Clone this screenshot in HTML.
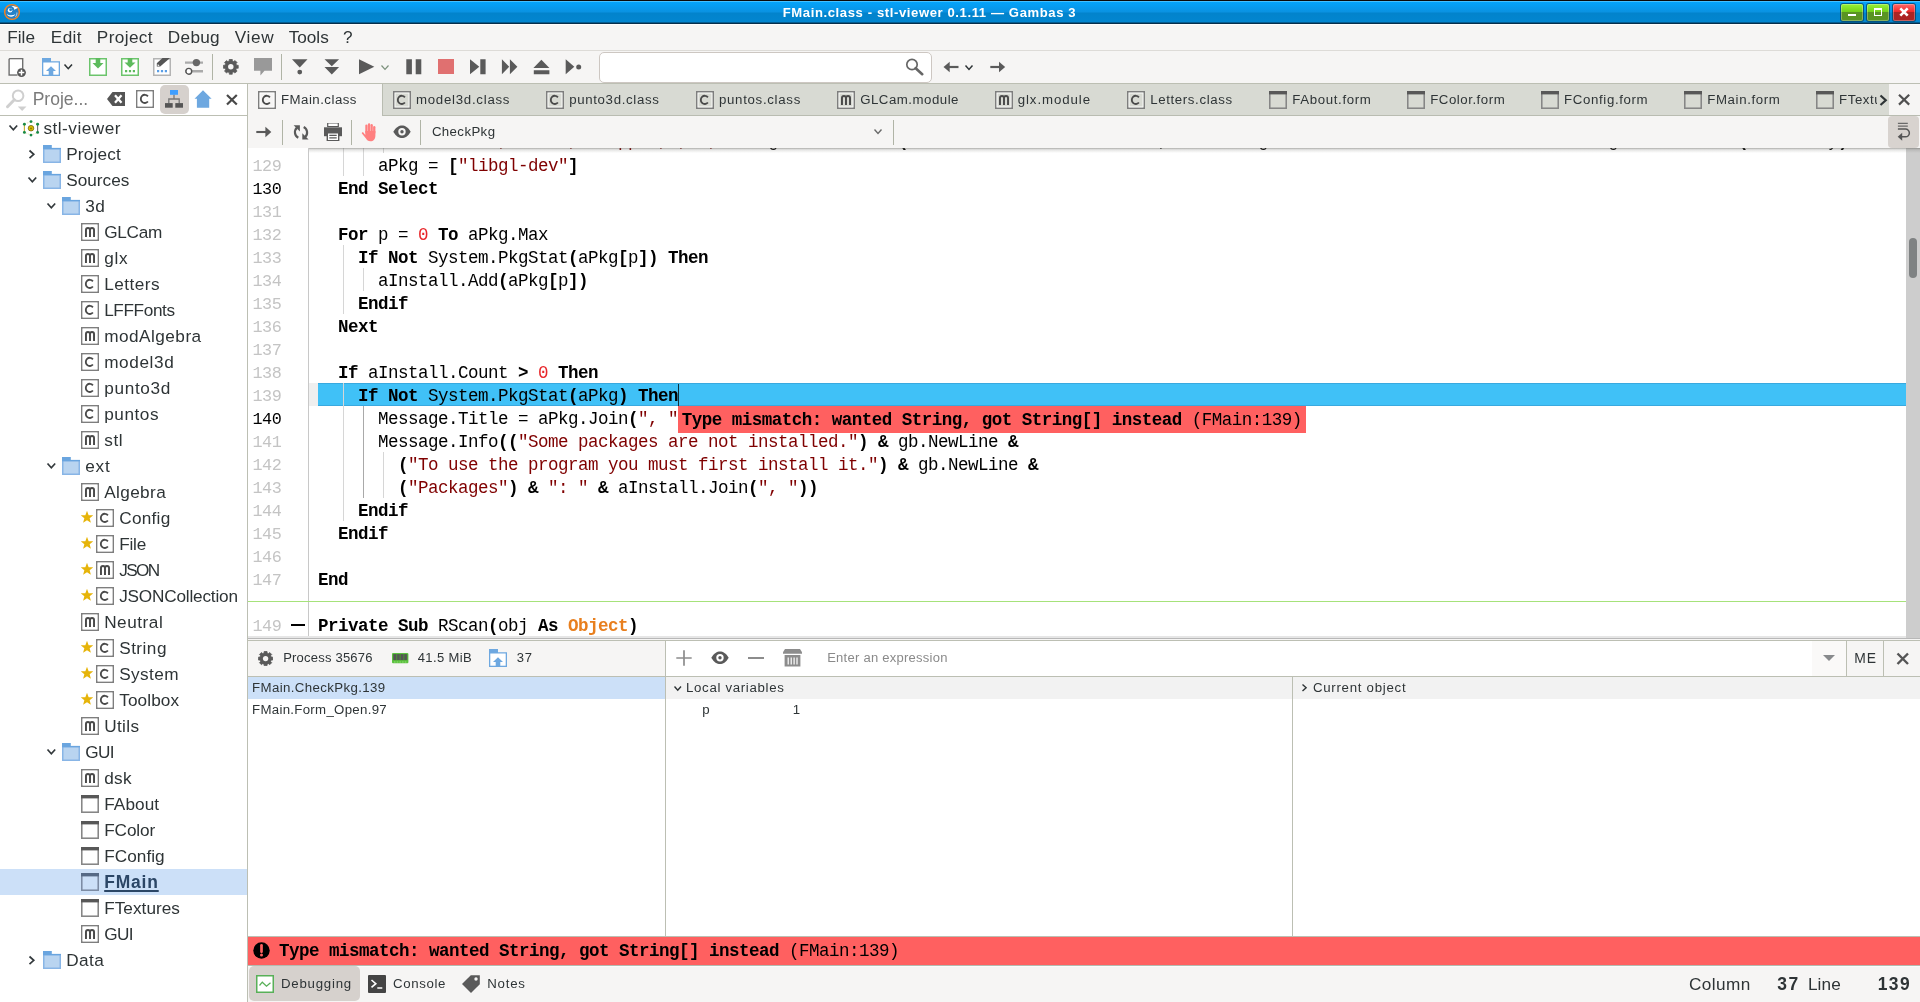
<!DOCTYPE html><html lang="en"><head><meta charset="utf-8"><title>FMain.class - stl-viewer 0.1.11 - Gambas 3</title><style>
html,body{margin:0;padding:0}
body{width:1920px;height:1002px;overflow:hidden;position:relative;background:#f6f5f4;will-change:transform;font-family:"Liberation Sans",sans-serif}
header,nav,aside,main,section,footer{display:block;position:static;margin:0;padding:0}
div,svg,.t{position:absolute;display:block}
.t{white-space:pre;margin:0}
.ln{left:0;width:1672px;height:23px;white-space:pre;font:17.500px/23px "Liberation Mono",monospace;letter-spacing:-0.502px;color:#000}
.ln span{position:static;display:inline}
.ln .no{position:absolute;left:4.500px;top:2.400px;font-size:16.800px;letter-spacing:-0.480px}
.ln .src{position:absolute;left:70px;top:2px}
.ln b{font-weight:700}
</style></head><body>
<header>
<div style="left:0px;top:0px;width:1920px;height:24px;background:linear-gradient(#0c0a08 0,#0c0a08 1px,#45c0ff 1px,#45c0ff 2px,#04a4fb 2px,#0a92e2 12px,#0283cc 13px,#0286d0 22.300px,#06304e 22.700px,#062c48 24px)"></div>
<svg style="left:3px;top:3px" width="18" height="18" viewBox="0 0 18 18" ><circle cx="9" cy="9" r="7.350" fill="#2482c8" stroke="#f58220" stroke-width="1.450"/><path d="M8.400 3.100C10.500 3 13 3.600 15 4.800C14 5.300 12.500 6 11.200 6.800C11.200 5.800 10.800 4.900 10.500 4.600C9.900 4 9.200 3.500 8.400 3.100z" fill="#fff"/><circle cx="7.050" cy="7.150" r="2.250" fill="#fff"/><circle cx="7.600" cy="6.700" r="1.450" fill="#2482c8"/><path d="M3.700 11C6 12.600 9.500 12.700 12.400 11.200C11 14.300 5.600 14.900 3.700 11z" fill="#fff"/><path d="M13.900 9.500C14 11.300 13.500 12.700 12.500 13.800" stroke="#fff" stroke-width=".9" fill="none" opacity=".75"/></svg>
<h1 class="t" style="left:782.7px;top:3.67px;font:700 13.08px/18px 'Liberation Sans',sans-serif;color:#fff;letter-spacing:0.602px;">FMain.class - stl-viewer 0.1.11 — Gambas 3</h1>
<div style="left:1840px;top:3px;width:24px;height:19px;background:#03466e;border-radius:3px;opacity:.8"></div>
<div style="left:1841px;top:4px;width:22px;height:17px;border-radius:2px;background:linear-gradient(#98f238 0,#72d018 8px,#5a9422 8.500px,#5a9422 100%);box-shadow:inset 0 0 0 1px rgba(255,255,255,.28)"></div>
<div style="left:1866px;top:3px;width:24px;height:19px;background:#03466e;border-radius:3px;opacity:.8"></div>
<div style="left:1867px;top:4px;width:22px;height:17px;border-radius:2px;background:linear-gradient(#98f238 0,#72d018 8px,#5a9422 8.500px,#5a9422 100%);box-shadow:inset 0 0 0 1px rgba(255,255,255,.28)"></div>
<div style="left:1892px;top:3px;width:24px;height:19px;background:#03466e;border-radius:3px;opacity:.8"></div>
<div style="left:1893px;top:4px;width:22px;height:17px;border-radius:2px;background:linear-gradient(#ff6a6a 0,#f02828 8px,#ac2424 8.500px,#ac2424 100%);box-shadow:inset 0 0 0 1px rgba(255,255,255,.28)"></div>
<div style="left:1848px;top:14px;width:8px;height:2px;background:#fff"></div>
<div style="left:1874px;top:8px;width:8px;height:8px;border:1px solid #fff;border-top-width:2px;box-sizing:border-box"></div>
<svg style="left:1899px;top:7px" width="10" height="10" viewBox="0 0 10 10" ><path d="M1.300 1.300L8.700 8.700M8.700 1.300L1.300 8.700" stroke="#fff" stroke-width="2.600"/></svg>
</header>
<nav>
<div style="left:0px;top:24px;width:1920px;height:1px;background:#fdfdfd"></div>
<span class="t" style="left:7.3px;top:25.34px;font:400 17.2px/24px 'Liberation Sans',sans-serif;color:#2e3436;letter-spacing:-0.001px;">File</span>
<span class="t" style="left:50.8px;top:25.34px;font:400 17.2px/24px 'Liberation Sans',sans-serif;color:#2e3436;letter-spacing:0.394px;">Edit</span>
<span class="t" style="left:96.8px;top:25.34px;font:400 17.2px/24px 'Liberation Sans',sans-serif;color:#2e3436;letter-spacing:0.386px;">Project</span>
<span class="t" style="left:167.8px;top:25.34px;font:400 17.2px/24px 'Liberation Sans',sans-serif;color:#2e3436;letter-spacing:0.309px;">Debug</span>
<span class="t" style="left:234.8px;top:25.34px;font:400 17.2px/24px 'Liberation Sans',sans-serif;color:#2e3436;letter-spacing:0.637px;">View</span>
<span class="t" style="left:288.8px;top:25.34px;font:400 17.2px/24px 'Liberation Sans',sans-serif;color:#2e3436;letter-spacing:-0.045px;">Tools</span>
<span class="t" style="left:343.1px;top:25.34px;font:400 17.2px/24px 'Liberation Sans',sans-serif;color:#2e3436;letter-spacing:0.037px;">?</span>
<div style="left:0px;top:50px;width:1920px;height:1px;background:#dddbd7"></div>
<svg style="left:7px;top:57px" width="20" height="20" viewBox="0 0 20 20" ><path d="M2.150 1.850h13.500v10M10.500 17.900H2.150V1.850" fill="#fff" stroke="#707070" stroke-width="1.500"/><rect x="2.900" y="2.600" width="12" height="14.500" fill="#fff"/><circle cx="14.500" cy="15.600" r="4.400" fill="#555"/><path d="M14.500 12.800v5.600M11.700 15.600h5.600" stroke="#fff" stroke-width="1.500"/></svg>
<svg style="left:42px;top:58px" width="18" height="18" viewBox="0 0 18 18" ><path d="M0 0h9v3.200h9V18H0z" fill="#6ea8e0"/><rect x="1.300" y="4.500" width="15.400" height="12.200" fill="#fff"/><path d="M9 8.200l5 4.800h-2.700v4.300H6.700V13H4z" fill="#6ea8e0"/></svg>
<svg style="left:63.25px;top:63.325px" width="10.5" height="7.95" viewBox="0 0 10.5 7.95" ><path d="M1.500 1.5L5.25 5.675L9.0 1.5" fill="none" stroke="#2e3436" stroke-width="1.6"/></svg>
<svg style="left:89px;top:58px" width="18" height="18" viewBox="0 0 18 18" ><rect x=".75" y=".75" width="16.500" height="16.500" fill="#fff" stroke="#6cc46c" stroke-width="1.500"/><path d="M6.700 0h4.600v5h3.200L9 10.500 3.500 5h3.200z" fill="#5dbb5d"/></svg>
<svg style="left:121px;top:58px" width="18" height="18" viewBox="0 0 18 18" ><rect x=".75" y=".75" width="16.500" height="16.500" fill="#fff" stroke="#6cc46c" stroke-width="1.500"/><path d="M6.700 0h4.600v4.500h3.200L9 9.800 3.500 4.500h3.200z" fill="#5dbb5d"/><path d="M4 12h2.200v2.200H4zM7.900 12h2.200v2.200H7.900zM11.800 12H14v2.200h-2.200z" fill="#5dbb5d"/></svg>
<svg style="left:153px;top:58px" width="18" height="18" viewBox="0 0 18 18" ><rect x=".75" y=".75" width="16.500" height="16.500" fill="#fff" stroke="#b4b4b4" stroke-width="1.500"/><path d="M9.500 0H17L7.200 8.600H3.800V5.300z" fill="#555"/><path d="M4.800 5.900l1.800 1.800-2 .3z" fill="#fff"/><path d="M4 12h2.200v2.200H4zM7.900 12h2.200v2.200H7.900zM11.800 12H14v2.200h-2.200z" fill="#5a9ee6"/></svg>
<svg style="left:185px;top:58px" width="18" height="18" viewBox="0 0 18 18" ><path d="M0 4.600h18M0 13.300h18" stroke="#aaa" stroke-width="2.400"/><circle cx="11.400" cy="4.600" r="3.700" fill="#666"/><circle cx="3.800" cy="13.300" r="2.900" fill="#fff" stroke="#555" stroke-width="1.400"/></svg>
<div style="left:212px;top:54px;width:1px;height:26px;background:#b0b4a6"></div>
<svg style="left:223px;top:59px" width="15.6" height="15.6" viewBox="0 0 15.6 15.6" ><path d="M6.33 0.34L9.27 0.34L9.37 2.00L10.79 2.59L12.03 1.49L14.11 3.57L13.01 4.81L13.60 6.23L15.26 6.33L15.26 9.27L13.60 9.37L13.01 10.79L14.11 12.03L12.03 14.11L10.79 13.01L9.37 13.60L9.27 15.26L6.33 15.26L6.23 13.60L4.81 13.01L3.57 14.11L1.49 12.03L2.59 10.79L2.00 9.37L0.34 9.27L0.34 6.33L2.00 6.23L2.59 4.81L1.49 3.57L3.57 1.49L4.81 2.59L6.23 2.00z" fill="#5a5a5a" stroke="#5a5a5a" stroke-width=".7" stroke-linejoin="round"/><circle cx="7.8" cy="7.8" r="2.73" fill="#f6f5f4"/></svg>
<svg style="left:254px;top:58px" width="18" height="18" viewBox="0 0 18 18" ><path d="M0 0h18v12.700h-7.500L6.400 17.400V12.700H0z" fill="#999"/></svg>
<div style="left:281px;top:54px;width:1px;height:26px;background:#b0b4a6"></div>
<svg style="left:292px;top:59px" width="16" height="16" viewBox="0 0 16 16" ><path d="M0 .3h15.500L7.750 8.500z" fill="#5a5a5a"/><circle cx="7.750" cy="13.100" r="2.400" fill="#5a5a5a"/></svg>
<svg style="left:324px;top:59px" width="16" height="16" viewBox="0 0 16 16" ><path d="M.5 .3h14.600L7.800 7.200zM.5 8h14.600L7.800 15.500z" fill="#5a5a5a"/></svg>
<svg style="left:359px;top:59px" width="16" height="16" viewBox="0 0 16 16" ><path d="M0 .3L15.300 7.750L0 15.200z" fill="#5a5a5a"/></svg>
<svg style="left:379.7px;top:63.5px" width="10" height="7.6000000000000005" viewBox="0 0 10 7.6000000000000005" ><path d="M1.500 1.5L5.0 5.4L8.5 1.5" fill="none" stroke="#7c917c" stroke-width="1.2"/></svg>
<svg style="left:406px;top:59px" width="16" height="16" viewBox="0 0 16 16" ><path d="M.3 .3h5.600v15H.3zM9.700 .3h5.600v15H9.700z" fill="#5a5a5a"/></svg>
<div style="left:438px;top:59.3px;width:15.7px;height:15.2px;background:#e07070"></div>
<svg style="left:470px;top:59px" width="16" height="16" viewBox="0 0 16 16" ><path d="M0 .3L9.300 7.750L0 15.200zM10.300 .3h5.300v15h-5.300z" fill="#5a5a5a"/></svg>
<svg style="left:501px;top:59px" width="17" height="16" viewBox="0 0 17 16" ><path d="M.9 .3L8.200 7.750L.9 15.200zM8.900 .3L16.400 7.750L8.900 15.200z" fill="#5a5a5a"/></svg>
<svg style="left:533px;top:59px" width="17" height="16" viewBox="0 0 17 16" ><path d="M8.400 .8L16.400 9H.4zM.8 11.300h15.600v3.900H.8z" fill="#5a5a5a"/></svg>
<svg style="left:565px;top:59px" width="17" height="16" viewBox="0 0 17 16" ><path d="M.7 .3L9.300 7.750L.7 15.200z" fill="#5a5a5a"/><circle cx="13.700" cy="7.900" r="2.500" fill="#5a5a5a"/></svg>
<div style="left:599px;top:51.5px;width:333px;height:31px;background:#fff;border:1px solid #cdc7c2;border-radius:5px;box-sizing:border-box"></div>
<svg style="left:905px;top:58px" width="19" height="18" viewBox="0 0 19 18" ><circle cx="7" cy="6.500" r="5.200" fill="none" stroke="#666" stroke-width="1.700"/><path d="M10.700 10.200l6.500 6" stroke="#666" stroke-width="2.600" stroke-linecap="round"/></svg>
<svg style="left:943px;top:60px" width="16" height="14" viewBox="0 0 16 14" ><path d="M15.500 7H4" fill="none" stroke="#5a5a5a" stroke-width="2.200"/><path d="M.5 7L6.700 1.700V12.300z" fill="#5a5a5a"/></svg>
<svg style="left:963.5px;top:63.7px" width="10" height="7.6000000000000005" viewBox="0 0 10 7.6000000000000005" ><path d="M1.500 1.5L5.0 5.4L8.5 1.5" fill="none" stroke="#2e3436" stroke-width="1.5"/></svg>
<svg style="left:990px;top:60px" width="16" height="14" viewBox="0 0 16 14" ><path d="M.3 7H11" fill="none" stroke="#5a5a5a" stroke-width="2.200"/><path d="M15.200 7L9 1.700V12.300z" fill="#5a5a5a"/></svg>
<div style="left:0px;top:83px;width:1920px;height:1px;background:#bcbfb3"></div>
</nav>
<aside>
<div style="left:0px;top:84px;width:247px;height:918px;background:#fff"></div>
<div style="left:247px;top:84px;width:1px;height:918px;background:#bcbfb3"></div>
<svg style="left:5px;top:89px" width="23" height="24" viewBox="0 0 23 24" ><circle cx="13.100" cy="6.700" r="5.300" fill="none" stroke="#cfcfcf" stroke-width="2"/><path d="M9.300 10.800L2.500 17.700" stroke="#cfcfcf" stroke-width="3" stroke-linecap="round"/><path d="M12.800 17.600h8.700l-4.350 4.300z" fill="#cfcfcf"/></svg>
<span class="t" style="left:32.7px;top:86.93px;font:400 17.52px/25px 'Liberation Sans',sans-serif;color:#7a7a7a;">Proje...</span>
<svg style="left:107px;top:92px" width="18" height="14" viewBox="0 0 18 14" ><path d="M5.500 0H18v14H5.500L0 7z" fill="#555"/><path d="M8 3.300l6.500 7.400M14.500 3.300L8 10.700" stroke="#fff" stroke-width="2.300"/></svg>
<svg style="left:136px;top:90px" width="18" height="18" viewBox="0 0 18 18" ><rect x=".78" y=".78" width="16.44" height="16.44" fill="#fff" stroke="#7e7e7e" stroke-width="1.560"/><rect x="2.050" y="2.050" width="13.9" height="13.9" fill="none" stroke="#fff" stroke-width="1" opacity=".8"/><path d="M11.90 6.30A4 4.100 0 1 0 11.90 11.50" fill="none" stroke="#4a4a4a" stroke-width="1.850"/></svg>
<div style="left:160px;top:85px;width:29px;height:29px;background:#d6d1cd;border-radius:5px"></div>
<svg style="left:165px;top:90px" width="18" height="18" viewBox="0 0 18 18" ><path d="M9 4.500V9M3.800 13.500V9h10.400v4.500" fill="none" stroke="#777" stroke-width="1.300"/><rect x="5" y="0" width="8" height="4.800" fill="#3d9eff"/><rect x="0" y="13.100" width="7.700" height="4.600" fill="#555"/><rect x="10.300" y="13.100" width="7.700" height="4.600" fill="#555"/></svg>
<svg style="left:194px;top:90px" width="18" height="18" viewBox="0 0 18 18" ><path d="M9 .3L17.600 8.800H15.200V17.700H2.900V8.800H.5z" fill="#6ea8e0"/></svg>
<svg style="left:225px;top:92.5px" width="14" height="14" viewBox="0 0 14 14" ><path d="M2 2L11.800 11.500M11.800 2L2 11.500" stroke="#484848" stroke-width="2.200"/></svg>
<div style="left:0px;top:115px;width:247px;height:1px;background:#bcbfb3"></div>
<svg style="left:8.15px;top:124.455px" width="10.7" height="8.09" viewBox="0 0 10.7 8.09" ><path d="M1.500 1.5L5.35 5.784999999999999L9.2 1.5" fill="none" stroke="#33393c" stroke-width="1.7"/></svg>
<svg style="left:22px;top:119px" width="18" height="18" viewBox="0 0 18 18" ><path d="M9 2.600L15.600 5.200V13.400L9 16.100L2.400 13.400V5.200z" fill="none" stroke="#ece6b8" stroke-width="1" stroke-dasharray="1.600 1.100"/><path d="M2.400 5.200V13.400" stroke="#c4ae34" stroke-width="1.100"/><path d="M15.600 5.200V13.400" stroke="#6e6e72" stroke-width="1.100"/><circle cx="9" cy="9.200" r="2.800" fill="#d8bc00" stroke="#6a5c08" stroke-width=".7"/><circle cx="9" cy="9.400" r=".9" fill="#8a7400"/><circle cx="9" cy="2.6" r="1.450" fill="#178a44"/><circle cx="15.6" cy="5.2" r="1.450" fill="#178a44"/><circle cx="15.6" cy="13.4" r="1.450" fill="#178a44"/><circle cx="9" cy="16.1" r="1.450" fill="#178a44"/><circle cx="2.4" cy="13.4" r="1.450" fill="#178a44"/><circle cx="2.4" cy="5.2" r="1.450" fill="#178a44"/></svg>
<span class="t" style="left:43.4px;top:115.94px;font:400 17.2px/24px 'Liberation Sans',sans-serif;color:#2e3436;letter-spacing:0.509px;">stl-viewer</span>
<svg style="left:28.455000000000002px;top:148.65px" width="8.09" height="10.7" viewBox="0 0 8.09 10.7" ><path d="M1.5 1.500L5.784999999999999 5.35L1.5 9.2" fill="none" stroke="#33393c" stroke-width="1.7"/></svg>
<svg style="left:43px;top:145px" width="18" height="18" viewBox="0 0 18 18" ><rect x=".75" y="3.600" width="16.500" height="13.650" fill="#b9d4f0" stroke="#88b5e6" stroke-width="1.500"/><path d="M0 0h8.800v3H18v1.200H0z" fill="#6aa5df"/></svg>
<span class="t" style="left:66.2px;top:141.94px;font:400 17.2px/24px 'Liberation Sans',sans-serif;color:#2e3436;letter-spacing:0.179px;">Project</span>
<svg style="left:27.15px;top:176.455px" width="10.7" height="8.09" viewBox="0 0 10.7 8.09" ><path d="M1.500 1.5L5.35 5.784999999999999L9.2 1.5" fill="none" stroke="#33393c" stroke-width="1.7"/></svg>
<svg style="left:43px;top:171px" width="18" height="18" viewBox="0 0 18 18" ><rect x=".75" y="3.600" width="16.500" height="13.650" fill="#b9d4f0" stroke="#88b5e6" stroke-width="1.500"/><path d="M0 0h8.800v3H18v1.200H0z" fill="#6aa5df"/></svg>
<span class="t" style="left:66.2px;top:167.94px;font:400 17.2px/24px 'Liberation Sans',sans-serif;color:#2e3436;letter-spacing:0.033px;">Sources</span>
<svg style="left:46.15px;top:202.455px" width="10.7" height="8.09" viewBox="0 0 10.7 8.09" ><path d="M1.500 1.5L5.35 5.784999999999999L9.2 1.5" fill="none" stroke="#33393c" stroke-width="1.7"/></svg>
<svg style="left:62px;top:197px" width="18" height="18" viewBox="0 0 18 18" ><rect x=".75" y="3.600" width="16.500" height="13.650" fill="#b9d4f0" stroke="#88b5e6" stroke-width="1.500"/><path d="M0 0h8.800v3H18v1.200H0z" fill="#6aa5df"/></svg>
<span class="t" style="left:85.2px;top:193.94px;font:400 17.2px/24px 'Liberation Sans',sans-serif;color:#2e3436;letter-spacing:0.609px;">3d</span>
<svg style="left:81px;top:223px" width="18" height="18" viewBox="0 0 18 18" ><rect x=".78" y=".78" width="16.44" height="16.44" fill="none" stroke="#7e7e7e" stroke-width="1.560"/><rect x="2.050" y="2.050" width="13.9" height="13.9" fill="none" stroke="#fff" stroke-width="1" opacity=".8"/><path d="M4.97 13.90V7.00a2.010 2.100 0 0 1 4.020 0V13.90M9.00 7.00a2.010 2.100 0 0 1 4.020 0V13.90" fill="none" stroke="#4a4a4a" stroke-width="1.950"/></svg>
<span class="t" style="left:104.2px;top:219.94px;font:400 17.2px/24px 'Liberation Sans',sans-serif;color:#2e3436;letter-spacing:-0.269px;">GLCam</span>
<svg style="left:81px;top:249px" width="18" height="18" viewBox="0 0 18 18" ><rect x=".78" y=".78" width="16.44" height="16.44" fill="none" stroke="#7e7e7e" stroke-width="1.560"/><rect x="2.050" y="2.050" width="13.9" height="13.9" fill="none" stroke="#fff" stroke-width="1" opacity=".8"/><path d="M4.97 13.90V7.00a2.010 2.100 0 0 1 4.020 0V13.90M9.00 7.00a2.010 2.100 0 0 1 4.020 0V13.90" fill="none" stroke="#4a4a4a" stroke-width="1.950"/></svg>
<span class="t" style="left:104.2px;top:245.94px;font:400 17.2px/24px 'Liberation Sans',sans-serif;color:#2e3436;letter-spacing:0.698px;">glx</span>
<svg style="left:81px;top:275px" width="18" height="18" viewBox="0 0 18 18" ><rect x=".78" y=".78" width="16.44" height="16.44" fill="none" stroke="#7e7e7e" stroke-width="1.560"/><rect x="2.050" y="2.050" width="13.9" height="13.9" fill="none" stroke="#fff" stroke-width="1" opacity=".8"/><path d="M11.90 6.30A4 4.100 0 1 0 11.90 11.50" fill="none" stroke="#4a4a4a" stroke-width="1.850"/></svg>
<span class="t" style="left:104.2px;top:271.94px;font:400 17.2px/24px 'Liberation Sans',sans-serif;color:#2e3436;letter-spacing:0.462px;">Letters</span>
<svg style="left:81px;top:301px" width="18" height="18" viewBox="0 0 18 18" ><rect x=".78" y=".78" width="16.44" height="16.44" fill="none" stroke="#7e7e7e" stroke-width="1.560"/><rect x="2.050" y="2.050" width="13.9" height="13.9" fill="none" stroke="#fff" stroke-width="1" opacity=".8"/><path d="M11.90 6.30A4 4.100 0 1 0 11.90 11.50" fill="none" stroke="#4a4a4a" stroke-width="1.850"/></svg>
<span class="t" style="left:104.2px;top:297.94px;font:400 17.2px/24px 'Liberation Sans',sans-serif;color:#2e3436;letter-spacing:-0.381px;">LFFFonts</span>
<svg style="left:81px;top:327px" width="18" height="18" viewBox="0 0 18 18" ><rect x=".78" y=".78" width="16.44" height="16.44" fill="none" stroke="#7e7e7e" stroke-width="1.560"/><rect x="2.050" y="2.050" width="13.9" height="13.9" fill="none" stroke="#fff" stroke-width="1" opacity=".8"/><path d="M4.97 13.90V7.00a2.010 2.100 0 0 1 4.020 0V13.90M9.00 7.00a2.010 2.100 0 0 1 4.020 0V13.90" fill="none" stroke="#4a4a4a" stroke-width="1.950"/></svg>
<span class="t" style="left:104.2px;top:323.94px;font:400 17.2px/24px 'Liberation Sans',sans-serif;color:#2e3436;letter-spacing:0.478px;">modAlgebra</span>
<svg style="left:81px;top:353px" width="18" height="18" viewBox="0 0 18 18" ><rect x=".78" y=".78" width="16.44" height="16.44" fill="none" stroke="#7e7e7e" stroke-width="1.560"/><rect x="2.050" y="2.050" width="13.9" height="13.9" fill="none" stroke="#fff" stroke-width="1" opacity=".8"/><path d="M11.90 6.30A4 4.100 0 1 0 11.90 11.50" fill="none" stroke="#4a4a4a" stroke-width="1.850"/></svg>
<span class="t" style="left:104.2px;top:349.94px;font:400 17.2px/24px 'Liberation Sans',sans-serif;color:#2e3436;letter-spacing:0.603px;">model3d</span>
<svg style="left:81px;top:379px" width="18" height="18" viewBox="0 0 18 18" ><rect x=".78" y=".78" width="16.44" height="16.44" fill="none" stroke="#7e7e7e" stroke-width="1.560"/><rect x="2.050" y="2.050" width="13.9" height="13.9" fill="none" stroke="#fff" stroke-width="1" opacity=".8"/><path d="M11.90 6.30A4 4.100 0 1 0 11.90 11.50" fill="none" stroke="#4a4a4a" stroke-width="1.850"/></svg>
<span class="t" style="left:104.2px;top:375.94px;font:400 17.2px/24px 'Liberation Sans',sans-serif;color:#2e3436;letter-spacing:0.672px;">punto3d</span>
<svg style="left:81px;top:405px" width="18" height="18" viewBox="0 0 18 18" ><rect x=".78" y=".78" width="16.44" height="16.44" fill="none" stroke="#7e7e7e" stroke-width="1.560"/><rect x="2.050" y="2.050" width="13.9" height="13.9" fill="none" stroke="#fff" stroke-width="1" opacity=".8"/><path d="M11.90 6.30A4 4.100 0 1 0 11.90 11.50" fill="none" stroke="#4a4a4a" stroke-width="1.850"/></svg>
<span class="t" style="left:104.2px;top:401.94px;font:400 17.2px/24px 'Liberation Sans',sans-serif;color:#2e3436;letter-spacing:0.539px;">puntos</span>
<svg style="left:81px;top:431px" width="18" height="18" viewBox="0 0 18 18" ><rect x=".78" y=".78" width="16.44" height="16.44" fill="none" stroke="#7e7e7e" stroke-width="1.560"/><rect x="2.050" y="2.050" width="13.9" height="13.9" fill="none" stroke="#fff" stroke-width="1" opacity=".8"/><path d="M4.97 13.90V7.00a2.010 2.100 0 0 1 4.020 0V13.90M9.00 7.00a2.010 2.100 0 0 1 4.020 0V13.90" fill="none" stroke="#4a4a4a" stroke-width="1.950"/></svg>
<span class="t" style="left:104.2px;top:427.94px;font:400 17.2px/24px 'Liberation Sans',sans-serif;color:#2e3436;letter-spacing:0.625px;">stl</span>
<svg style="left:46.15px;top:462.455px" width="10.7" height="8.09" viewBox="0 0 10.7 8.09" ><path d="M1.500 1.5L5.35 5.784999999999999L9.2 1.5" fill="none" stroke="#33393c" stroke-width="1.7"/></svg>
<svg style="left:62px;top:457px" width="18" height="18" viewBox="0 0 18 18" ><rect x=".75" y="3.600" width="16.500" height="13.650" fill="#b9d4f0" stroke="#88b5e6" stroke-width="1.500"/><path d="M0 0h8.800v3H18v1.200H0z" fill="#6aa5df"/></svg>
<span class="t" style="left:85.2px;top:453.94px;font:400 17.2px/24px 'Liberation Sans',sans-serif;color:#2e3436;letter-spacing:0.792px;">ext</span>
<svg style="left:81px;top:483px" width="18" height="18" viewBox="0 0 18 18" ><rect x=".78" y=".78" width="16.44" height="16.44" fill="none" stroke="#7e7e7e" stroke-width="1.560"/><rect x="2.050" y="2.050" width="13.9" height="13.9" fill="none" stroke="#fff" stroke-width="1" opacity=".8"/><path d="M4.97 13.90V7.00a2.010 2.100 0 0 1 4.020 0V13.90M9.00 7.00a2.010 2.100 0 0 1 4.020 0V13.90" fill="none" stroke="#4a4a4a" stroke-width="1.950"/></svg>
<span class="t" style="left:104.2px;top:479.94px;font:400 17.2px/24px 'Liberation Sans',sans-serif;color:#2e3436;letter-spacing:0.384px;">Algebra</span>
<svg style="left:81.2px;top:511.2px" width="12" height="12" viewBox="0 0 12 12" ><path d="M6.00 -0.20L7.65 4.13L12.28 4.36L8.66 7.27L9.88 11.74L6.00 9.20L2.12 11.74L3.34 7.27L-0.28 4.36L4.35 4.13z" fill="#e6b40a"/></svg>
<svg style="left:96px;top:509px" width="18" height="18" viewBox="0 0 18 18" ><rect x=".78" y=".78" width="16.44" height="16.44" fill="none" stroke="#7e7e7e" stroke-width="1.560"/><rect x="2.050" y="2.050" width="13.9" height="13.9" fill="none" stroke="#fff" stroke-width="1" opacity=".8"/><path d="M11.90 6.30A4 4.100 0 1 0 11.90 11.50" fill="none" stroke="#4a4a4a" stroke-width="1.850"/></svg>
<span class="t" style="left:119.2px;top:505.94px;font:400 17.2px/24px 'Liberation Sans',sans-serif;color:#2e3436;letter-spacing:0.276px;">Config</span>
<svg style="left:81.2px;top:537.2px" width="12" height="12" viewBox="0 0 12 12" ><path d="M6.00 -0.20L7.65 4.13L12.28 4.36L8.66 7.27L9.88 11.74L6.00 9.20L2.12 11.74L3.34 7.27L-0.28 4.36L4.35 4.13z" fill="#e6b40a"/></svg>
<svg style="left:96px;top:535px" width="18" height="18" viewBox="0 0 18 18" ><rect x=".78" y=".78" width="16.44" height="16.44" fill="none" stroke="#7e7e7e" stroke-width="1.560"/><rect x="2.050" y="2.050" width="13.9" height="13.9" fill="none" stroke="#fff" stroke-width="1" opacity=".8"/><path d="M11.90 6.30A4 4.100 0 1 0 11.90 11.50" fill="none" stroke="#4a4a4a" stroke-width="1.850"/></svg>
<span class="t" style="left:119.2px;top:531.94px;font:400 17.2px/24px 'Liberation Sans',sans-serif;color:#2e3436;letter-spacing:-0.230px;">File</span>
<svg style="left:81.2px;top:563.2px" width="12" height="12" viewBox="0 0 12 12" ><path d="M6.00 -0.20L7.65 4.13L12.28 4.36L8.66 7.27L9.88 11.74L6.00 9.20L2.12 11.74L3.34 7.27L-0.28 4.36L4.35 4.13z" fill="#e6b40a"/></svg>
<svg style="left:96px;top:561px" width="18" height="18" viewBox="0 0 18 18" ><rect x=".78" y=".78" width="16.44" height="16.44" fill="none" stroke="#7e7e7e" stroke-width="1.560"/><rect x="2.050" y="2.050" width="13.9" height="13.9" fill="none" stroke="#fff" stroke-width="1" opacity=".8"/><path d="M4.97 13.90V7.00a2.010 2.100 0 0 1 4.020 0V13.90M9.00 7.00a2.010 2.100 0 0 1 4.020 0V13.90" fill="none" stroke="#4a4a4a" stroke-width="1.950"/></svg>
<span class="t" style="left:119.2px;top:557.94px;font:400 17.2px/24px 'Liberation Sans',sans-serif;color:#2e3436;letter-spacing:-1.602px;">JSON</span>
<svg style="left:81.2px;top:589.2px" width="12" height="12" viewBox="0 0 12 12" ><path d="M6.00 -0.20L7.65 4.13L12.28 4.36L8.66 7.27L9.88 11.74L6.00 9.20L2.12 11.74L3.34 7.27L-0.28 4.36L4.35 4.13z" fill="#e6b40a"/></svg>
<svg style="left:96px;top:587px" width="18" height="18" viewBox="0 0 18 18" ><rect x=".78" y=".78" width="16.44" height="16.44" fill="none" stroke="#7e7e7e" stroke-width="1.560"/><rect x="2.050" y="2.050" width="13.9" height="13.9" fill="none" stroke="#fff" stroke-width="1" opacity=".8"/><path d="M11.90 6.30A4 4.100 0 1 0 11.90 11.50" fill="none" stroke="#4a4a4a" stroke-width="1.850"/></svg>
<span class="t" style="left:119.2px;top:583.94px;font:400 17.2px/24px 'Liberation Sans',sans-serif;color:#2e3436;letter-spacing:-0.195px;">JSONCollection</span>
<svg style="left:81px;top:613px" width="18" height="18" viewBox="0 0 18 18" ><rect x=".78" y=".78" width="16.44" height="16.44" fill="none" stroke="#7e7e7e" stroke-width="1.560"/><rect x="2.050" y="2.050" width="13.9" height="13.9" fill="none" stroke="#fff" stroke-width="1" opacity=".8"/><path d="M4.97 13.90V7.00a2.010 2.100 0 0 1 4.020 0V13.90M9.00 7.00a2.010 2.100 0 0 1 4.020 0V13.90" fill="none" stroke="#4a4a4a" stroke-width="1.950"/></svg>
<span class="t" style="left:104.2px;top:609.94px;font:400 17.2px/24px 'Liberation Sans',sans-serif;color:#2e3436;letter-spacing:0.522px;">Neutral</span>
<svg style="left:81.2px;top:641.2px" width="12" height="12" viewBox="0 0 12 12" ><path d="M6.00 -0.20L7.65 4.13L12.28 4.36L8.66 7.27L9.88 11.74L6.00 9.20L2.12 11.74L3.34 7.27L-0.28 4.36L4.35 4.13z" fill="#e6b40a"/></svg>
<svg style="left:96px;top:639px" width="18" height="18" viewBox="0 0 18 18" ><rect x=".78" y=".78" width="16.44" height="16.44" fill="none" stroke="#7e7e7e" stroke-width="1.560"/><rect x="2.050" y="2.050" width="13.9" height="13.9" fill="none" stroke="#fff" stroke-width="1" opacity=".8"/><path d="M11.90 6.30A4 4.100 0 1 0 11.90 11.50" fill="none" stroke="#4a4a4a" stroke-width="1.850"/></svg>
<span class="t" style="left:119.2px;top:635.94px;font:400 17.2px/24px 'Liberation Sans',sans-serif;color:#2e3436;letter-spacing:0.474px;">String</span>
<svg style="left:81.2px;top:667.2px" width="12" height="12" viewBox="0 0 12 12" ><path d="M6.00 -0.20L7.65 4.13L12.28 4.36L8.66 7.27L9.88 11.74L6.00 9.20L2.12 11.74L3.34 7.27L-0.28 4.36L4.35 4.13z" fill="#e6b40a"/></svg>
<svg style="left:96px;top:665px" width="18" height="18" viewBox="0 0 18 18" ><rect x=".78" y=".78" width="16.44" height="16.44" fill="none" stroke="#7e7e7e" stroke-width="1.560"/><rect x="2.050" y="2.050" width="13.9" height="13.9" fill="none" stroke="#fff" stroke-width="1" opacity=".8"/><path d="M11.90 6.30A4 4.100 0 1 0 11.90 11.50" fill="none" stroke="#4a4a4a" stroke-width="1.850"/></svg>
<span class="t" style="left:119.2px;top:661.94px;font:400 17.2px/24px 'Liberation Sans',sans-serif;color:#2e3436;letter-spacing:0.393px;">System</span>
<svg style="left:81.2px;top:693.2px" width="12" height="12" viewBox="0 0 12 12" ><path d="M6.00 -0.20L7.65 4.13L12.28 4.36L8.66 7.27L9.88 11.74L6.00 9.20L2.12 11.74L3.34 7.27L-0.28 4.36L4.35 4.13z" fill="#e6b40a"/></svg>
<svg style="left:96px;top:691px" width="18" height="18" viewBox="0 0 18 18" ><rect x=".78" y=".78" width="16.44" height="16.44" fill="none" stroke="#7e7e7e" stroke-width="1.560"/><rect x="2.050" y="2.050" width="13.9" height="13.9" fill="none" stroke="#fff" stroke-width="1" opacity=".8"/><path d="M11.90 6.30A4 4.100 0 1 0 11.90 11.50" fill="none" stroke="#4a4a4a" stroke-width="1.850"/></svg>
<span class="t" style="left:119.2px;top:687.94px;font:400 17.2px/24px 'Liberation Sans',sans-serif;color:#2e3436;letter-spacing:0.107px;">Toolbox</span>
<svg style="left:81px;top:717px" width="18" height="18" viewBox="0 0 18 18" ><rect x=".78" y=".78" width="16.44" height="16.44" fill="none" stroke="#7e7e7e" stroke-width="1.560"/><rect x="2.050" y="2.050" width="13.9" height="13.9" fill="none" stroke="#fff" stroke-width="1" opacity=".8"/><path d="M4.97 13.90V7.00a2.010 2.100 0 0 1 4.020 0V13.90M9.00 7.00a2.010 2.100 0 0 1 4.020 0V13.90" fill="none" stroke="#4a4a4a" stroke-width="1.950"/></svg>
<span class="t" style="left:104.2px;top:713.94px;font:400 17.2px/24px 'Liberation Sans',sans-serif;color:#2e3436;letter-spacing:0.359px;">Utils</span>
<svg style="left:46.15px;top:748.455px" width="10.7" height="8.09" viewBox="0 0 10.7 8.09" ><path d="M1.500 1.5L5.35 5.784999999999999L9.2 1.5" fill="none" stroke="#33393c" stroke-width="1.7"/></svg>
<svg style="left:62px;top:743px" width="18" height="18" viewBox="0 0 18 18" ><rect x=".75" y="3.600" width="16.500" height="13.650" fill="#b9d4f0" stroke="#88b5e6" stroke-width="1.500"/><path d="M0 0h8.800v3H18v1.200H0z" fill="#6aa5df"/></svg>
<span class="t" style="left:85.2px;top:739.94px;font:400 17.2px/24px 'Liberation Sans',sans-serif;color:#2e3436;letter-spacing:-0.578px;">GUI</span>
<svg style="left:81px;top:769px" width="18" height="18" viewBox="0 0 18 18" ><rect x=".78" y=".78" width="16.44" height="16.44" fill="none" stroke="#7e7e7e" stroke-width="1.560"/><rect x="2.050" y="2.050" width="13.9" height="13.9" fill="none" stroke="#fff" stroke-width="1" opacity=".8"/><path d="M4.97 13.90V7.00a2.010 2.100 0 0 1 4.020 0V13.90M9.00 7.00a2.010 2.100 0 0 1 4.020 0V13.90" fill="none" stroke="#4a4a4a" stroke-width="1.950"/></svg>
<span class="t" style="left:104.2px;top:765.94px;font:400 17.2px/24px 'Liberation Sans',sans-serif;color:#2e3436;letter-spacing:0.339px;">dsk</span>
<svg style="left:81px;top:795px" width="18" height="18" viewBox="0 0 18 18" ><rect x=".78" y=".78" width="16.44" height="16.44" fill="none" stroke="#868686" stroke-width="1.560"/><rect x="0" y="0" width="18" height="3.400" fill="#585858"/></svg>
<span class="t" style="left:104.2px;top:791.94px;font:400 17.2px/24px 'Liberation Sans',sans-serif;color:#2e3436;letter-spacing:0.096px;">FAbout</span>
<svg style="left:81px;top:821px" width="18" height="18" viewBox="0 0 18 18" ><rect x=".78" y=".78" width="16.44" height="16.44" fill="none" stroke="#868686" stroke-width="1.560"/><rect x="0" y="0" width="18" height="3.400" fill="#585858"/></svg>
<span class="t" style="left:104.2px;top:817.94px;font:400 17.2px/24px 'Liberation Sans',sans-serif;color:#2e3436;letter-spacing:-0.099px;">FColor</span>
<svg style="left:81px;top:847px" width="18" height="18" viewBox="0 0 18 18" ><rect x=".78" y=".78" width="16.44" height="16.44" fill="none" stroke="#868686" stroke-width="1.560"/><rect x="0" y="0" width="18" height="3.400" fill="#585858"/></svg>
<span class="t" style="left:104.2px;top:843.94px;font:400 17.2px/24px 'Liberation Sans',sans-serif;color:#2e3436;letter-spacing:0.051px;">FConfig</span>
<div style="left:0px;top:869px;width:247px;height:26px;background:#cce0f8"></div>
<svg style="left:81px;top:873px" width="18" height="18" viewBox="0 0 18 18" ><rect x=".78" y=".78" width="16.44" height="16.44" fill="none" stroke="#7c8ca4" stroke-width="1.560"/><rect x="0" y="0" width="18" height="3.400" fill="#566a86"/></svg>
<span class="t" style="left:104.2px;top:870.26px;font:700 17.44px/24px 'Liberation Sans',sans-serif;color:#2b4666;letter-spacing:0.831px;text-decoration:underline;text-decoration-thickness:1.500px;text-underline-offset:2px;">FMain</span>
<svg style="left:81px;top:899px" width="18" height="18" viewBox="0 0 18 18" ><rect x=".78" y=".78" width="16.44" height="16.44" fill="none" stroke="#868686" stroke-width="1.560"/><rect x="0" y="0" width="18" height="3.400" fill="#585858"/></svg>
<span class="t" style="left:104.2px;top:895.94px;font:400 17.2px/24px 'Liberation Sans',sans-serif;color:#2e3436;letter-spacing:0.040px;">FTextures</span>
<svg style="left:81px;top:925px" width="18" height="18" viewBox="0 0 18 18" ><rect x=".78" y=".78" width="16.44" height="16.44" fill="none" stroke="#7e7e7e" stroke-width="1.560"/><rect x="2.050" y="2.050" width="13.9" height="13.9" fill="none" stroke="#fff" stroke-width="1" opacity=".8"/><path d="M4.97 13.90V7.00a2.010 2.100 0 0 1 4.020 0V13.90M9.00 7.00a2.010 2.100 0 0 1 4.020 0V13.90" fill="none" stroke="#4a4a4a" stroke-width="1.950"/></svg>
<span class="t" style="left:104.2px;top:921.94px;font:400 17.2px/24px 'Liberation Sans',sans-serif;color:#2e3436;letter-spacing:-0.578px;">GUI</span>
<svg style="left:28.455000000000002px;top:954.65px" width="8.09" height="10.7" viewBox="0 0 8.09 10.7" ><path d="M1.5 1.500L5.784999999999999 5.35L1.5 9.2" fill="none" stroke="#33393c" stroke-width="1.7"/></svg>
<svg style="left:43px;top:951px" width="18" height="18" viewBox="0 0 18 18" ><rect x=".75" y="3.600" width="16.500" height="13.650" fill="#b9d4f0" stroke="#88b5e6" stroke-width="1.500"/><path d="M0 0h8.800v3H18v1.200H0z" fill="#6aa5df"/></svg>
<span class="t" style="left:66.2px;top:947.94px;font:400 17.2px/24px 'Liberation Sans',sans-serif;color:#2e3436;letter-spacing:0.473px;">Data</span>
</aside>
<main>
<div style="left:248px;top:84px;width:1641px;height:32px;background:#d8dad3"></div>
<div style="left:1889px;top:84px;width:31px;height:32px;background:#f6f5f4"></div>
<div style="left:248px;top:115px;width:1672px;height:1px;background:#b9bcb1"></div>
<div style="left:248px;top:84px;width:135px;height:32px;background:#f6f5f4;border-right:1px solid #b9bcb1;box-sizing:border-box"></div>
<svg style="left:258px;top:91px" width="18" height="18" viewBox="0 0 18 18" ><rect x=".78" y=".78" width="16.44" height="16.44" fill="none" stroke="#7e7e7e" stroke-width="1.560"/><rect x="2.050" y="2.050" width="13.9" height="13.9" fill="none" stroke="#fff" stroke-width="1" opacity=".8"/><path d="M11.90 6.30A4 4.100 0 1 0 11.90 11.50" fill="none" stroke="#4a4a4a" stroke-width="1.850"/></svg>
<span class="t" style="left:280.95px;top:90.21px;font:400 13.26px/19px 'Liberation Sans',sans-serif;color:#2e3436;letter-spacing:0.487px;">FMain.class</span>
<svg style="left:393px;top:91px" width="18" height="18" viewBox="0 0 18 18" ><rect x=".78" y=".78" width="16.44" height="16.44" fill="none" stroke="#7e7e7e" stroke-width="1.560"/><rect x="2.050" y="2.050" width="13.9" height="13.9" fill="none" stroke="#fff" stroke-width="1" opacity=".8"/><path d="M11.90 6.30A4 4.100 0 1 0 11.90 11.50" fill="none" stroke="#4a4a4a" stroke-width="1.850"/></svg>
<span class="t" style="left:415.95px;top:90.21px;font:400 13.26px/19px 'Liberation Sans',sans-serif;color:#2e3436;letter-spacing:0.738px;">model3d.class</span>
<svg style="left:546px;top:91px" width="18" height="18" viewBox="0 0 18 18" ><rect x=".78" y=".78" width="16.44" height="16.44" fill="none" stroke="#7e7e7e" stroke-width="1.560"/><rect x="2.050" y="2.050" width="13.9" height="13.9" fill="none" stroke="#fff" stroke-width="1" opacity=".8"/><path d="M11.90 6.30A4 4.100 0 1 0 11.90 11.50" fill="none" stroke="#4a4a4a" stroke-width="1.850"/></svg>
<span class="t" style="left:569.2px;top:90.21px;font:400 13.26px/19px 'Liberation Sans',sans-serif;color:#2e3436;letter-spacing:0.656px;">punto3d.class</span>
<svg style="left:696px;top:91px" width="18" height="18" viewBox="0 0 18 18" ><rect x=".78" y=".78" width="16.44" height="16.44" fill="none" stroke="#7e7e7e" stroke-width="1.560"/><rect x="2.050" y="2.050" width="13.9" height="13.9" fill="none" stroke="#fff" stroke-width="1" opacity=".8"/><path d="M11.90 6.30A4 4.100 0 1 0 11.90 11.50" fill="none" stroke="#4a4a4a" stroke-width="1.850"/></svg>
<span class="t" style="left:718.95px;top:90.21px;font:400 13.26px/19px 'Liberation Sans',sans-serif;color:#2e3436;letter-spacing:0.699px;">puntos.class</span>
<svg style="left:837px;top:91px" width="18" height="18" viewBox="0 0 18 18" ><rect x=".78" y=".78" width="16.44" height="16.44" fill="none" stroke="#7e7e7e" stroke-width="1.560"/><rect x="2.050" y="2.050" width="13.9" height="13.9" fill="none" stroke="#fff" stroke-width="1" opacity=".8"/><path d="M4.97 13.90V7.00a2.010 2.100 0 0 1 4.020 0V13.90M9.00 7.00a2.010 2.100 0 0 1 4.020 0V13.90" fill="none" stroke="#4a4a4a" stroke-width="1.950"/></svg>
<span class="t" style="left:860.2px;top:90.21px;font:400 13.26px/19px 'Liberation Sans',sans-serif;color:#2e3436;letter-spacing:0.500px;">GLCam.module</span>
<svg style="left:995px;top:91px" width="18" height="18" viewBox="0 0 18 18" ><rect x=".78" y=".78" width="16.44" height="16.44" fill="none" stroke="#7e7e7e" stroke-width="1.560"/><rect x="2.050" y="2.050" width="13.9" height="13.9" fill="none" stroke="#fff" stroke-width="1" opacity=".8"/><path d="M4.97 13.90V7.00a2.010 2.100 0 0 1 4.020 0V13.90M9.00 7.00a2.010 2.100 0 0 1 4.020 0V13.90" fill="none" stroke="#4a4a4a" stroke-width="1.950"/></svg>
<span class="t" style="left:1017.7px;top:90.21px;font:400 13.26px/19px 'Liberation Sans',sans-serif;color:#2e3436;letter-spacing:0.922px;">glx.module</span>
<svg style="left:1127px;top:91px" width="18" height="18" viewBox="0 0 18 18" ><rect x=".78" y=".78" width="16.44" height="16.44" fill="none" stroke="#7e7e7e" stroke-width="1.560"/><rect x="2.050" y="2.050" width="13.9" height="13.9" fill="none" stroke="#fff" stroke-width="1" opacity=".8"/><path d="M11.90 6.30A4 4.100 0 1 0 11.90 11.50" fill="none" stroke="#4a4a4a" stroke-width="1.850"/></svg>
<span class="t" style="left:1150.2px;top:90.21px;font:400 13.26px/19px 'Liberation Sans',sans-serif;color:#2e3436;letter-spacing:0.628px;">Letters.class</span>
<svg style="left:1269px;top:91px" width="18" height="18" viewBox="0 0 18 18" ><rect x=".78" y=".78" width="16.44" height="16.44" fill="none" stroke="#868686" stroke-width="1.560"/><rect x="0" y="0" width="18" height="3.400" fill="#585858"/></svg>
<span class="t" style="left:1292.2px;top:90.21px;font:400 13.26px/19px 'Liberation Sans',sans-serif;color:#2e3436;letter-spacing:0.648px;">FAbout.form</span>
<svg style="left:1407px;top:91px" width="18" height="18" viewBox="0 0 18 18" ><rect x=".78" y=".78" width="16.44" height="16.44" fill="none" stroke="#868686" stroke-width="1.560"/><rect x="0" y="0" width="18" height="3.400" fill="#585858"/></svg>
<span class="t" style="left:1430.2px;top:90.21px;font:400 13.26px/19px 'Liberation Sans',sans-serif;color:#2e3436;letter-spacing:0.530px;">FColor.form</span>
<svg style="left:1541px;top:91px" width="18" height="18" viewBox="0 0 18 18" ><rect x=".78" y=".78" width="16.44" height="16.44" fill="none" stroke="#868686" stroke-width="1.560"/><rect x="0" y="0" width="18" height="3.400" fill="#585858"/></svg>
<span class="t" style="left:1564.1px;top:90.21px;font:400 13.26px/19px 'Liberation Sans',sans-serif;color:#2e3436;letter-spacing:0.627px;">FConfig.form</span>
<svg style="left:1684px;top:91px" width="18" height="18" viewBox="0 0 18 18" ><rect x=".78" y=".78" width="16.44" height="16.44" fill="none" stroke="#868686" stroke-width="1.560"/><rect x="0" y="0" width="18" height="3.400" fill="#585858"/></svg>
<span class="t" style="left:1707.2px;top:90.21px;font:400 13.26px/19px 'Liberation Sans',sans-serif;color:#2e3436;letter-spacing:0.630px;">FMain.form</span>
<svg style="left:1816px;top:91px" width="18" height="18" viewBox="0 0 18 18" ><rect x=".78" y=".78" width="16.44" height="16.44" fill="none" stroke="#868686" stroke-width="1.560"/><rect x="0" y="0" width="18" height="3.400" fill="#585858"/></svg>
<div style="left:1838.4px;top:84px;width:39.09999999999991px;height:31px;overflow:hidden">
<span class="t" style="left:0.7px;top:6.21px;font:400 13.26px/19px 'Liberation Sans',sans-serif;color:#2e3436;letter-spacing:0.550px;">FTextures.form</span>
</div>
<svg style="left:1878.7250000000001px;top:93.75px" width="9.350000000000001" height="12.5" viewBox="0 0 9.350000000000001 12.5" ><path d="M1.5 1.500L6.775 6.25L1.5 11.0" fill="none" stroke="#2e3436" stroke-width="2.2"/></svg>
<svg style="left:1897px;top:92.5px" width="14" height="14" viewBox="0 0 14 14" ><path d="M2 1.800L12.200 11.600M12.200 1.800L2 11.600" stroke="#505050" stroke-width="2.200"/></svg>
<div style="left:248px;top:116px;width:1672px;height:32px;background:#f6f5f4"></div>
<svg style="left:256px;top:125px" width="16" height="14" viewBox="0 0 16 14" ><path d="M.3 7H11" fill="none" stroke="#5a5a5a" stroke-width="2.100"/><path d="M15.300 7L9.400 1.800V12.200z" fill="#5a5a5a"/></svg>
<div style="left:282px;top:119.5px;width:1px;height:25px;background:#b0b4a6"></div>
<div style="left:351px;top:119.5px;width:1px;height:25px;background:#b0b4a6"></div>
<div style="left:420px;top:119.5px;width:1px;height:25px;background:#b0b4a6"></div>
<div style="left:893px;top:119.5px;width:1px;height:25px;background:#b0b4a6"></div>
<svg style="left:292px;top:123.5px" width="18" height="17" viewBox="0 0 18 17" ><path d="M6.300 13.800A6.300 6.300 0 0 1 5 3.600M11.700 2.900A6.300 6.300 0 0 1 13.200 13" fill="none" stroke="#5a5a5a" stroke-width="2.200"/><path d="M1.600 1.300h6.300v6.300z" fill="#5a5a5a"/><path d="M16.600 15.500h-6.300V9.200z" fill="#5a5a5a"/></svg>
<svg style="left:324px;top:123px" width="18" height="18" viewBox="0 0 18 18" ><path d="M3.700 0h10.600v3.500H3.700z" fill="#fff" stroke="#5a5a5a" stroke-width="1.200"/><path d="M0 4.300h18v8.900H0z" fill="#5a5a5a"/><path d="M3.300 9.800h11.400v7.800H3.300z" fill="#fff" stroke="#5a5a5a" stroke-width="1.400"/><path d="M5.300 12.300h7.400M5.300 14.800h7.400" stroke="#5a5a5a" stroke-width="1.300"/></svg>
<svg style="left:361px;top:122.5px" width="16" height="19" viewBox="0 0 16 19" ><g fill="#ff8080"><rect x="4.300" y="1.500" width="2.300" height="9" rx="1.150"/><rect x="6.900" y=".3" width="2.300" height="10" rx="1.150"/><rect x="9.500" y="1" width="2.300" height="10" rx="1.150"/><rect x="12.100" y="3" width="2.300" height="8" rx="1.150"/><path d="M4.300 8h10.100v4.500c0 3.600-2 5.800-5 5.800c-2.300 0-3.500-1-4.600-3L.9 10.500c-.5-1 .8-1.800 1.500-.9L4.300 12z"/></g></svg>
<svg style="left:393px;top:125px" width="18" height="14" viewBox="0 0 18 14" ><path d="M.3 6.700C3 2 6 .4 9 .4s6 1.600 8.700 6.300C15 11.400 12 13 9 13S3 11.400.3 6.700z" fill="#5a5a5a"/><circle cx="9" cy="6.700" r="3.700" fill="#f6f5f4"/><circle cx="9" cy="6.700" r="1.700" fill="#5a5a5a"/></svg>
<span class="t" style="left:431.9px;top:122.21px;font:400 13.26px/19px 'Liberation Sans',sans-serif;color:#2e3436;letter-spacing:0.389px;">CheckPkg</span>
<svg style="left:872.5px;top:127.69999999999999px" width="10" height="7.6000000000000005" viewBox="0 0 10 7.6000000000000005" ><path d="M1.500 1.5L5.0 5.4L8.5 1.5" fill="none" stroke="#6a6a6a" stroke-width="1.4"/></svg>
<div style="left:1888.3px;top:116.3px;width:31px;height:31.3px;background:#d8d3cf;border-radius:4px"></div>
<svg style="left:1896px;top:122px" width="16" height="20" viewBox="0 0 16 20" ><path d="M1.900 1.400h9.900M1.900 4.200h9.900" stroke="#6a6a6a" stroke-width="1.200"/><path d="M1.900 7.100h7.600a3.850 3.850 0 0 1 0 7.700H5" fill="none" stroke="#555" stroke-width="1.500"/><path d="M6.200 10.700L1.700 14.800L6.200 18.800z" fill="#555"/></svg>
<div style="left:248px;top:148px;width:1672px;height:491px;background:#fff;overflow:hidden">
<div style="left:60px;top:0px;width:1px;height:491px;background:#c8c8c8"></div>
<div style="left:61px;top:235px;width:9px;height:23px;background:#efefef"></div>
<div style="left:70px;top:235px;width:1588px;height:23px;background:#40c1f7;border-top:1px solid #39a9df;border-bottom:1px solid #39a9df;box-sizing:border-box"></div>
<div style="left:0px;top:453px;width:1658px;height:1px;background:#a6e27a"></div>
<div style="left:95px;top:-18px;width:1px;height:46px;background:#d6d6d6"></div>
<div style="left:115px;top:-18px;width:1px;height:46px;background:#d6d6d6"></div>
<div style="left:135px;top:-18px;width:1px;height:23px;background:#d6d6d6"></div>
<div style="left:95px;top:97px;width:1px;height:69px;background:#d6d6d6"></div>
<div style="left:115px;top:120px;width:1px;height:23px;background:#d6d6d6"></div>
<div style="left:95px;top:235px;width:1px;height:138px;background:#d6d6d6"></div>
<div style="left:115px;top:258px;width:1px;height:92px;background:#a9a9a9"></div>
<div style="left:135px;top:304px;width:1px;height:46px;background:#d6d6d6"></div>
<div class="ln" style="top:-20.5px"><span class="no" style="color:#c4c4c4">128</span><span class="src"><span style="color:#000;font-weight:400">                  </span><span style="color:#7f0000;font-weight:400">,</span><span style="color:#000;font-weight:400">      </span><span style="color:#7f0000;font-weight:400">,</span><span style="color:#000;font-weight:400">  </span><span style="color:#7f0000;font-weight:400">_</span><span style="color:#000;font-weight:400"> </span><span style="color:#7f0000;font-weight:400">p</span><span style="color:#7f0000;font-weight:400">p</span><span style="color:#000;font-weight:400">  </span><span style="color:#7f0000;font-weight:400">,</span><span style="color:#000;font-weight:400"> </span><span style="color:#7f0000;font-weight:400">,</span><span style="color:#000;font-weight:400">  </span><span style="color:#7f0000;font-weight:400">,</span><span style="color:#000;font-weight:400">     </span><span style="color:#000;font-weight:400">g</span><span style="color:#000;font-weight:400">            </span><span style="color:#000;font-weight:700">(</span><span style="color:#000;font-weight:400">                         </span><span style="color:#000;font-weight:400">,</span><span style="color:#000;font-weight:400">         </span><span style="color:#000;font-weight:400">g</span><span style="color:#000;font-weight:400">                    </span><span style="color:#7f0000;font-weight:400">_</span><span style="color:#000;font-weight:400">             </span><span style="color:#000;font-weight:400">g</span><span style="color:#000;font-weight:400">            </span><span style="color:#000;font-weight:700">(</span><span style="color:#000;font-weight:400">        </span><span style="color:#000;font-weight:400">y</span><span style="color:#000;font-weight:700">)</span></span></div>
<div class="ln" style="top:5px"><span class="no" style="color:#c4c4c4">129</span><span class="src">      <span style="color:#000;font-weight:400">aPkg = </span><span style="color:#000;font-weight:700">[</span><span style="color:#7f0000;font-weight:400">&quot;libgl-dev&quot;</span><span style="color:#000;font-weight:700">]</span></span></div>
<div class="ln" style="top:28px"><span class="no" style="color:#000">130</span><span class="src">  <span style="color:#000;font-weight:700">End Select</span></span></div>
<div class="ln" style="top:51px"><span class="no" style="color:#c4c4c4">131</span><span class="src"></span></div>
<div class="ln" style="top:74px"><span class="no" style="color:#c4c4c4">132</span><span class="src">  <span style="color:#000;font-weight:700">For</span><span style="color:#000;font-weight:400"> p = </span><span style="color:#e8262a;font-weight:400">0</span><span style="color:#000;font-weight:400"> </span><span style="color:#000;font-weight:700">To</span><span style="color:#000;font-weight:400"> aPkg.Max</span></span></div>
<div class="ln" style="top:97px"><span class="no" style="color:#c4c4c4">133</span><span class="src">    <span style="color:#000;font-weight:700">If Not</span><span style="color:#000;font-weight:400"> System.PkgStat</span><span style="color:#000;font-weight:700">(</span><span style="color:#000;font-weight:400">aPkg</span><span style="color:#000;font-weight:700">[</span><span style="color:#000;font-weight:400">p</span><span style="color:#000;font-weight:700">])</span><span style="color:#000;font-weight:400"> </span><span style="color:#000;font-weight:700">Then</span></span></div>
<div class="ln" style="top:120px"><span class="no" style="color:#c4c4c4">134</span><span class="src">      <span style="color:#000;font-weight:400">aInstall.Add</span><span style="color:#000;font-weight:700">(</span><span style="color:#000;font-weight:400">aPkg</span><span style="color:#000;font-weight:700">[</span><span style="color:#000;font-weight:400">p</span><span style="color:#000;font-weight:700">])</span></span></div>
<div class="ln" style="top:143px"><span class="no" style="color:#c4c4c4">135</span><span class="src">    <span style="color:#000;font-weight:700">Endif</span></span></div>
<div class="ln" style="top:166px"><span class="no" style="color:#c4c4c4">136</span><span class="src">  <span style="color:#000;font-weight:700">Next</span></span></div>
<div class="ln" style="top:189px"><span class="no" style="color:#c4c4c4">137</span><span class="src"></span></div>
<div class="ln" style="top:212px"><span class="no" style="color:#c4c4c4">138</span><span class="src">  <span style="color:#000;font-weight:700">If</span><span style="color:#000;font-weight:400"> aInstall.Count </span><span style="color:#000;font-weight:700">&gt;</span><span style="color:#000;font-weight:400"> </span><span style="color:#e8262a;font-weight:400">0</span><span style="color:#000;font-weight:400"> </span><span style="color:#000;font-weight:700">Then</span></span></div>
<div class="ln" style="top:235px"><span class="no" style="color:#c4c4c4">139</span><span class="src">    <span style="color:#000;font-weight:700">If Not</span><span style="color:#000;font-weight:400"> System.PkgStat</span><span style="color:#000;font-weight:700">(</span><span style="color:#000;font-weight:400">aPkg</span><span style="color:#000;font-weight:700">)</span><span style="color:#000;font-weight:400"> </span><span style="color:#000;font-weight:700">Then</span></span></div>
<div class="ln" style="top:258px"><span class="no" style="color:#000">140</span><span class="src">      <span style="color:#000;font-weight:400">Message.Title = aPkg.Join</span><span style="color:#000;font-weight:700">(</span><span style="color:#7f0000;font-weight:400">&quot;, &quot;</span></span></div>
<div class="ln" style="top:281px"><span class="no" style="color:#c4c4c4">141</span><span class="src">      <span style="color:#000;font-weight:400">Message.Info</span><span style="color:#000;font-weight:700">((</span><span style="color:#7f0000;font-weight:400">&quot;Some packages are not installed.&quot;</span><span style="color:#000;font-weight:700">)</span><span style="color:#000;font-weight:400"> </span><span style="color:#000;font-weight:700">&amp;</span><span style="color:#000;font-weight:400"> gb.NewLine </span><span style="color:#000;font-weight:700">&amp;</span></span></div>
<div class="ln" style="top:304px"><span class="no" style="color:#c4c4c4">142</span><span class="src">        <span style="color:#000;font-weight:700">(</span><span style="color:#7f0000;font-weight:400">&quot;To use the program you must first install it.&quot;</span><span style="color:#000;font-weight:700">)</span><span style="color:#000;font-weight:400"> </span><span style="color:#000;font-weight:700">&amp;</span><span style="color:#000;font-weight:400"> gb.NewLine </span><span style="color:#000;font-weight:700">&amp;</span></span></div>
<div class="ln" style="top:327px"><span class="no" style="color:#c4c4c4">143</span><span class="src">        <span style="color:#000;font-weight:700">(</span><span style="color:#7f0000;font-weight:400">&quot;Packages&quot;</span><span style="color:#000;font-weight:700">)</span><span style="color:#000;font-weight:400"> </span><span style="color:#000;font-weight:700">&amp;</span><span style="color:#000;font-weight:400"> </span><span style="color:#7f0000;font-weight:400">&quot;: &quot;</span><span style="color:#000;font-weight:400"> </span><span style="color:#000;font-weight:700">&amp;</span><span style="color:#000;font-weight:400"> aInstall.Join</span><span style="color:#000;font-weight:700">(</span><span style="color:#7f0000;font-weight:400">&quot;, &quot;</span><span style="color:#000;font-weight:700">))</span></span></div>
<div class="ln" style="top:350px"><span class="no" style="color:#c4c4c4">144</span><span class="src">    <span style="color:#000;font-weight:700">Endif</span></span></div>
<div class="ln" style="top:373px"><span class="no" style="color:#c4c4c4">145</span><span class="src">  <span style="color:#000;font-weight:700">Endif</span></span></div>
<div class="ln" style="top:396px"><span class="no" style="color:#c4c4c4">146</span><span class="src"></span></div>
<div class="ln" style="top:419px"><span class="no" style="color:#c4c4c4">147</span><span class="src"><span style="color:#000;font-weight:700">End</span></span></div>
<div class="ln" style="top:442px"><span class="no" style="color:#c4c4c4"></span><span class="src"></span></div>
<div class="ln" style="top:465px"><span class="no" style="color:#c4c4c4">149</span><span class="src"><span style="color:#000;font-weight:700">Private Sub</span><span style="color:#000;font-weight:400"> RScan</span><span style="color:#000;font-weight:700">(</span><span style="color:#000;font-weight:400">obj </span><span style="color:#000;font-weight:700">As</span><span style="color:#000;font-weight:400"> </span><span style="color:#e87f1e;font-weight:700">Object</span><span style="color:#000;font-weight:700">)</span></span></div>
<div style="left:43px;top:475.5px;width:13.5px;height:2px;background:#000"></div>
<div style="left:430px;top:236px;width:1px;height:22px;background:#10303c"></div>
<div class="ln tip" style="left:430px;top:258px;width:628px;height:26.500px;background:#ff6060"><span class="src" style="left:3.800px;top:2.600px"><b>Type mismatch: wanted String, got String[] instead</b> (FMain:139)</span></div>
<div style="left:1658px;top:0px;width:14px;height:491px;background:#cdcdcd"></div>
<div style="left:1661px;top:90px;width:8px;height:40px;background:#7f8283;border-radius:4px"></div>
<div style="left:61px;top:0px;width:1611px;height:5px;background:linear-gradient(rgba(90,90,84,.5),rgba(90,90,84,.16) 35%,rgba(90,90,84,0))"></div>
<div style="left:0px;top:488px;width:1658px;height:2px;background:#e6e6e6"></div>
<div style="left:0px;top:490px;width:1672px;height:1px;background:#b8b8b8"></div>
</div>
</main>
<section>
<div style="left:248px;top:639px;width:1672px;height:1px;background:#f6f5f4"></div>
<div style="left:248px;top:640px;width:1672px;height:1px;background:#bcbfb3"></div>
<div style="left:248px;top:641px;width:417px;height:35px;background:#f6f5f4"></div>
<div style="left:666px;top:641px;width:1146px;height:35px;background:#fff"></div>
<div style="left:1812px;top:641px;width:34px;height:35px;background:#faf9f8"></div>
<div style="left:1847px;top:641px;width:73px;height:35px;background:#f6f5f4"></div>
<div style="left:1846px;top:641px;width:1px;height:35px;background:#bcbfb3"></div>
<div style="left:1883px;top:641px;width:1px;height:35px;background:#bcbfb3"></div>
<div style="left:248px;top:676px;width:1672px;height:1px;background:#bcbfb3"></div>
<div style="left:248px;top:677px;width:1672px;height:260px;background:#fff"></div>
<div style="left:665px;top:641px;width:1px;height:296px;background:#bcbfb3"></div>
<div style="left:1292px;top:677px;width:1px;height:260px;background:#bcbfb3"></div>
<div style="left:248px;top:936px;width:1672px;height:1px;background:#bcbfb3"></div>
<svg style="left:258.2px;top:650.6px" width="15.2" height="15.2" viewBox="0 0 15.2 15.2" ><path d="M6.17 0.34L9.03 0.34L9.13 1.95L10.51 2.52L11.72 1.45L13.75 3.48L12.68 4.69L13.25 6.07L14.86 6.17L14.86 9.03L13.25 9.13L12.68 10.51L13.75 11.72L11.72 13.75L10.51 12.68L9.13 13.25L9.03 14.86L6.17 14.86L6.07 13.25L4.69 12.68L3.48 13.75L1.45 11.72L2.52 10.51L1.95 9.13L0.34 9.03L0.34 6.17L1.95 6.07L2.52 4.69L1.45 3.48L3.48 1.45L4.69 2.52L6.07 1.95z" fill="#5a5a5a" stroke="#5a5a5a" stroke-width=".7" stroke-linejoin="round"/><circle cx="7.6" cy="7.6" r="2.66" fill="#f6f5f4"/></svg>
<span class="t" style="left:283.2px;top:649.29px;font:400 13.02px/18px 'Liberation Sans',sans-serif;color:#2e3436;letter-spacing:0.206px;">Process 35676</span>
<svg style="left:392px;top:653px" width="17" height="10.5" viewBox="0 0 17 10.5" ><rect x="0" y="0" width="16.400" height="10.200" rx="1" fill="#5cc040"/><rect x="1" y="1" width="14.400" height="6.200" fill="#4a8a38"/><path d="M2.800 1.300v5.600M6.400 1.300v5.600M10 1.300v5.600M13.600 1.300v5.600" stroke="#555" stroke-width="2.400"/><path d="M2 9h12.400" stroke="#8fe070" stroke-width="1" stroke-dasharray="1.500 1.200"/></svg>
<span class="t" style="left:417.7px;top:649.29px;font:400 13.02px/18px 'Liberation Sans',sans-serif;color:#2e3436;letter-spacing:0.366px;">41.5 MiB</span>
<svg style="left:489px;top:649px" width="18" height="18" viewBox="0 0 18 18" ><path d="M0 0h9v3.200h9V18H0z" fill="#6ea8e0"/><rect x="1.300" y="4.500" width="15.400" height="12.200" fill="#fff"/><path d="M9 8.200l5 4.800h-2.700v4.300H6.700V13H4z" fill="#6ea8e0"/></svg>
<span class="t" style="left:516.7px;top:649.29px;font:400 13.02px/18px 'Liberation Sans',sans-serif;color:#2e3436;letter-spacing:0.758px;">37</span>
<div style="left:248px;top:677px;width:417px;height:22px;background:#cce0f8"></div>
<span class="t" style="left:252.0px;top:677.71px;font:400 13.26px/19px 'Liberation Sans',sans-serif;color:#2e3436;letter-spacing:0.379px;">FMain.CheckPkg.139</span>
<span class="t" style="left:252.0px;top:699.71px;font:400 13.26px/19px 'Liberation Sans',sans-serif;color:#2e3436;letter-spacing:0.299px;">FMain.Form_Open.97</span>
<svg style="left:676px;top:650px" width="16" height="16" viewBox="0 0 16 16" ><path d="M8 .3v15.400M.3 8h15.400" stroke="#8c8c8c" stroke-width="1.700"/></svg>
<svg style="left:711px;top:651px" width="18" height="14" viewBox="0 0 18 14" ><path d="M.3 6.700C3 2 6 .4 9 .4s6 1.600 8.700 6.300C15 11.400 12 13 9 13S3 11.400.3 6.700z" fill="#5a5a5a"/><circle cx="9" cy="6.700" r="3.700" fill="#fff"/><circle cx="9" cy="6.700" r="1.700" fill="#5a5a5a"/></svg>
<div style="left:748px;top:657.2px;width:15.8px;height:1.7px;background:#8c8c8c"></div>
<svg style="left:783px;top:649px" width="19" height="18" viewBox="0 0 19 18" ><path d="M2 0h15l2 3.300v1.500H0V3.300z" fill="#8c8c8c"/><path d="M1.600 6h15.800v11.500H1.600z" fill="#8c8c8c"/><path d="M5.200 8.500v7M8.200 8.500v7M11.100 8.500v7M14 8.500v7" stroke="#fff" stroke-width="1.200"/></svg>
<span class="t" style="left:827.2px;top:648.99px;font:400 13.02px/18px 'Liberation Sans',sans-serif;color:#8a8a8a;letter-spacing:0.249px;">Enter an expression</span>
<svg style="left:1823px;top:655px" width="12" height="6" viewBox="0 0 12 6" ><path d="M0 0h12L6 6z" fill="#888a8c"/></svg>
<span class="t" style="left:1854.2px;top:648.69px;font:400 13.87px/19px 'Liberation Sans',sans-serif;color:#2e3436;letter-spacing:1.102px;">ME</span>
<svg style="left:1895.5px;top:651.5px" width="14" height="14" viewBox="0 0 14 14" ><path d="M1.500 1.500L12 12M12 1.500L1.500 12" stroke="#555" stroke-width="2.400"/></svg>
<div style="left:666px;top:677px;width:626px;height:22px;background:#f2f2f2"></div>
<div style="left:1293px;top:677px;width:627px;height:22px;background:#f2f2f2"></div>
<svg style="left:673.45px;top:684.875px" width="9.5" height="7.25" viewBox="0 0 9.5 7.25" ><path d="M1.500 1.5L4.75 5.125L8.0 1.5" fill="none" stroke="#2e3436" stroke-width="1.4"/></svg>
<span class="t" style="left:686.0px;top:677.71px;font:400 13.26px/19px 'Liberation Sans',sans-serif;color:#2e3436;letter-spacing:0.674px;">Local variables</span>
<span class="t" style="left:702.2px;top:699.71px;font:400 13.26px/19px 'Liberation Sans',sans-serif;color:#2e3436;letter-spacing:0.891px;">p</span>
<span class="t" style="left:792.7px;top:699.71px;font:400 13.26px/19px 'Liberation Sans',sans-serif;color:#2e3436;letter-spacing:0.906px;">1</span>
<svg style="left:1301.375px;top:683.25px" width="7.25" height="9.5" viewBox="0 0 7.25 9.5" ><path d="M1.5 1.500L5.125 4.75L1.5 8.0" fill="none" stroke="#2e3436" stroke-width="1.4"/></svg>
<span class="t" style="left:1312.9px;top:677.71px;font:400 13.26px/19px 'Liberation Sans',sans-serif;color:#2e3436;letter-spacing:0.733px;">Current object</span>
</section>
<footer>
<div style="left:248px;top:937px;width:1672px;height:28px;background:#ff6060"></div>
<svg style="left:253px;top:942px" width="17" height="17" viewBox="0 0 17 17" ><circle cx="8.500" cy="8.500" r="8.200" fill="#000"/><path d="M8.500 3.300v6.500" stroke="#ff6060" stroke-width="2.700" stroke-linecap="round"/><circle cx="8.500" cy="13" r="1.500" fill="#ff6060"/></svg>
<div class="ln tip" style="left:279px;top:937px;width:900px;height:28px"><span class="src" style="left:0;top:3.200px"><b>Type mismatch: wanted String, got String[] instead</b> (FMain:139)</span></div>
<div style="left:248px;top:965px;width:1672px;height:37px;background:#f6f5f4"></div>
<div style="left:248px;top:965px;width:1672px;height:1px;background:#b4bab0"></div>
<div style="left:248px;top:966px;width:1672px;height:1px;background:#fbfbfb"></div>
<div style="left:248.5px;top:966.3px;width:111px;height:35.2px;background:#d6d1cd;border-radius:5px"></div>
<svg style="left:256px;top:975px" width="18" height="18" viewBox="0 0 18 18" ><rect x=".75" y=".75" width="16.500" height="16.500" fill="#fff" stroke="#58b058" stroke-width="1.500"/><path d="M3.500 10.500l2.800-3.300 4.200 4 4-3.400" fill="none" stroke="#58b058" stroke-width="1.300"/></svg>
<span class="t" style="left:281.0px;top:973.91px;font:400 13.26px/19px 'Liberation Sans',sans-serif;color:#2e3436;letter-spacing:0.766px;">Debugging</span>
<svg style="left:368px;top:975px" width="18" height="18" viewBox="0 0 18 18" ><rect width="18" height="18" rx="1" fill="#444"/><path d="M3.500 5l4.300 3.700L3.500 12.400" fill="none" stroke="#fff" stroke-width="1.600"/><path d="M9.300 13h5" stroke="#fff" stroke-width="1.500"/></svg>
<span class="t" style="left:393.0px;top:973.91px;font:400 13.26px/19px 'Liberation Sans',sans-serif;color:#2e3436;letter-spacing:0.625px;">Console</span>
<svg style="left:462px;top:974px" width="19" height="19" viewBox="0 0 19 19" ><path d="M8.800 1.200H17.800V10.200L9 19 0 10z" fill="#5a5a5a"/><circle cx="14" cy="5" r="1.700" fill="#f6f5f4"/></svg>
<span class="t" style="left:487.2px;top:973.91px;font:400 13.26px/19px 'Liberation Sans',sans-serif;color:#2e3436;letter-spacing:0.775px;">Notes</span>
<span class="t" style="left:1688.9px;top:971.84px;font:400 17.2px/24px 'Liberation Sans',sans-serif;color:#2e3436;letter-spacing:0.461px;">Column</span>
<span class="t" style="left:1777.2px;top:971.76px;font:700 17.44px/24px 'Liberation Sans',sans-serif;color:#2e3436;letter-spacing:1.547px;">37</span>
<span class="t" style="left:1807.9px;top:971.84px;font:400 17.2px/24px 'Liberation Sans',sans-serif;color:#2e3436;letter-spacing:0.125px;">Line</span>
<span class="t" style="left:1877.7px;top:971.76px;font:700 17.44px/24px 'Liberation Sans',sans-serif;color:#2e3436;letter-spacing:1.469px;">139</span>
</footer>
</body></html>
